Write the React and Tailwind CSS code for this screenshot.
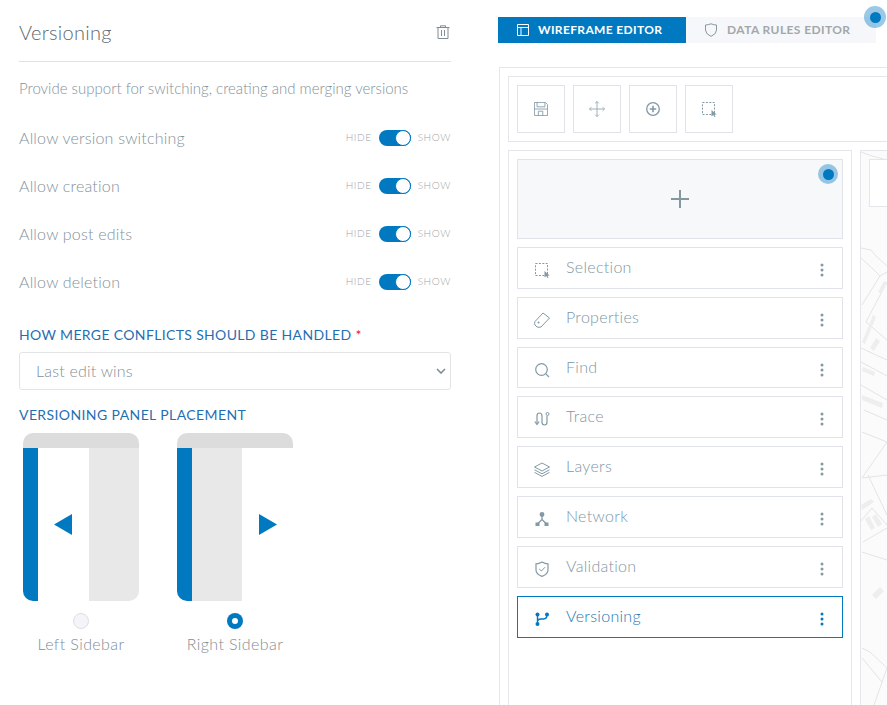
const stroke = "#8399a5";

const Icon = ({ children, className = "", color = stroke }) => (
  <svg viewBox="0 0 16 16" fill="none" stroke={color} strokeWidth="1" className={`w-4 h-4 shrink-0 ${className}`}>
    {children}
  </svg>
);

const SelectGlyph = ({ color }) => (
  <Icon color={color}>
    <rect x="1.5" y="1.5" width="12" height="12" strokeDasharray="2 1.4" />
    <path d="M10.5 9 L15.6 13.4 L13.4 13.7 L14.6 15.8 L13.5 16 L12.2 14 L10.5 15.4 Z" fill={color} stroke="none" />
  </Icon>
);

const TagGlyph = ({ color }) => (
  <Icon color={color}>
    <path d="M9 1 L15.5 6 L7 15 Q5 15.6 3 15 L1 13 Q0 11 1 9.5 Z" />
    <circle cx="4.5" cy="10.5" r="1" fill={color} stroke="none" />
  </Icon>
);

const FindGlyph = ({ color }) => (
  <Icon color={color}>
    <circle cx="7.5" cy="7.5" r="5.8" strokeWidth="1.2" />
    <path d="M11.8 11.8 L15 15" strokeWidth="1.2" />
  </Icon>
);

const TraceGlyph = ({ color }) => (
  <Icon color={color}>
    <path d="M3 13 V5 Q3 2 5.5 2 Q8 2 8 5 V11 Q8 14 10.5 14 Q13 14 13 11 V5" strokeWidth="1.2" />
    <path d="M.8 10.5 L3 13.5 L5.2 10.5" strokeWidth="1.2" />
    <circle cx="13.5" cy="3" r="1.5" />
  </Icon>
);

const LayersGlyph = ({ color }) => (
  <Icon color={color}>
    <path d="M8 2 L15.5 6 L8 10 L.5 6 Z" />
    <path d="M.5 8.8 L8 12.8 L15.5 8.8" />
    <path d="M.5 11.4 L8 15.4 L15.5 11.4" />
  </Icon>
);

const NetworkGlyph = ({ color }) => (
  <Icon color={color}>
    <circle cx="8" cy="3.5" r="2.4" fill={color} stroke="none" />
    <rect x="1.5" y="11.5" width="4" height="3.5" fill={color} stroke="none" />
    <rect x="10.5" y="11.5" width="4" height="3.5" fill={color} stroke="none" />
    <path d="M8 4 V8.5 L3.5 13 M8 8.5 L12.5 13" strokeWidth="1.3" />
  </Icon>
);

const ShieldCheckGlyph = ({ color }) => (
  <Icon color={color}>
    <path d="M8 1 Q11 2.8 14 2.8 V9 Q14 13 8 15.4 Q2 13 2 9 V2.8 Q5 2.8 8 1 Z" strokeWidth="1.2" />
    <path d="M5.2 8 L7.4 10 L11 6.2" />
  </Icon>
);

const BranchGlyph = ({ color }) => (
  <Icon color={color}>
    <circle cx="3.5" cy="3.5" r="2" fill={color} stroke="none" />
    <circle cx="3.5" cy="13" r="2" fill={color} stroke="none" />
    <circle cx="13" cy="3.5" r="2" fill={color} stroke="none" />
    <path d="M3.5 3.5 V13 M3.5 10.5 Q3.5 8 7 8 H9.5 Q13 8 13 3.5" strokeWidth="1.4" />
  </Icon>
);

const items = [
  { name: "Selection", Glyph: SelectGlyph, h: "h-[42px]" },
  { name: "Properties", Glyph: TagGlyph, h: "h-[42px]" },
  { name: "Find", Glyph: FindGlyph, h: "h-[41px]" },
  { name: "Trace", Glyph: TraceGlyph, h: "h-[42px]" },
  { name: "Layers", Glyph: LayersGlyph, h: "h-[42px]" },
  { name: "Network", Glyph: NetworkGlyph, h: "h-[42px]" },
  { name: "Validation", Glyph: ShieldCheckGlyph, h: "h-[42px]" },
  { name: "Versioning", Glyph: BranchGlyph, h: "h-[42px]", active: true },
];

const Kebab = ({ color }) => (
  <svg viewBox="0 0 4 14" className="w-1 h-[14px] mt-1" fill={color}>
    <circle cx="2" cy="2" r="1.5" />
    <circle cx="2" cy="7" r="1.5" />
    <circle cx="2" cy="12" r="1.5" />
  </svg>
);

const Item = ({ name, Glyph, h, active }) => {
  const color = active ? "#0079c1" : stroke;
  return (
    <li
      className={`${h} flex items-center pl-4 pr-[18px] border ${
        active ? "border-[#0079c1] text-[#2277b5]" : "border-[#e0e3e9] text-[#7d97a6]"
      }`}
    >
      <span className="mt-1">
        <Glyph color={color} />
      </span>
      <span className="ml-4 -mt-[2px] flex-1 text-[16px] leading-5 tracking-[0.3px]">{name}</span>
      <Kebab color={color} />
    </li>
  );
};

const ToolButton = ({ children }) => (
  <button className="w-12 h-12 border border-[#e0e3e9] flex items-center justify-center">{children}</button>
);

const Toggle = ({ label }) => (
  <div className="h-12 flex items-center justify-between">
    <span className="text-[16px] tracking-[0.2px] text-[#7f929c]">{label}</span>
    <div className="flex items-center -mt-px text-[10px] tracking-[0.6px] text-[#a0a5a9]">
      <span>HIDE</span>
      <span className="mx-[7px] w-8 h-4 rounded-full bg-[#0079c1] flex justify-end">
        <span className="w-4 h-4 rounded-full bg-white border border-[#0079c1]"></span>
      </span>
      <span>SHOW</span>
    </div>
  </div>
);

const Pulse = ({ className }) => (
  <span className={`absolute flex items-center justify-center rounded-full bg-[#0079c1]/40 ${className}`}>
    <span className="w-[11px] h-[11px] rounded-full bg-[#0079c1]"></span>
  </span>
);

const Placement = ({ side, label, checked }) => (
  <div className="w-[116px] flex flex-col items-center">
    <div className={`w-full h-[168px] flex flex-col overflow-hidden rounded-t-[10px] rounded-bl-[10px] ${side === "left" ? "rounded-br-[10px]" : ""}`}>
      <div className="h-[15px] bg-[#dcdcdc]"></div>
      <div className="flex-1 flex">
        <div className="w-[15px] bg-[#0079c1]"></div>
        {side === "right" && <div className="w-[50px] bg-[#e8e8e8]"></div>}
        <div className="flex-1 flex items-center justify-center">
          <svg viewBox="0 0 18 21" className={`w-[18px] h-[21px] ${side === "left" ? "-ml-px" : ""}`} fill="#0079c1">
            <path d={side === "left" ? "M0 10.5 L18 0 V21 Z" : "M0 0 L18 10.5 L0 21 Z"} />
          </svg>
        </div>
        {side === "left" && <div className="w-[50px] bg-[#e8e8e8]"></div>}
      </div>
    </div>
    {checked ? (
      <span className="mt-3 w-4 h-4 rounded-full bg-[#0079c1] flex items-center justify-center">
        <span className="w-1.5 h-1.5 rounded-full bg-white"></span>
      </span>
    ) : (
      <span className="mt-3 w-4 h-4 rounded-full bg-[#f4f5f8] border border-[#dcdfe3]"></span>
    )}
    <span className="mt-[3px] text-[16px] leading-6 tracking-[0.4px] text-[#7f8d95]">{label}</span>
  </div>
);

const MapLines = () => (
  <svg viewBox="861 151 60 554" className="absolute top-0 left-0 w-[60px] h-[554px]" fill="none" stroke="#e4e4e4">
    <path d="M861 152 L872 156 L887 160" />
    <path d="M861 248 L871 250 L876 256 L887 266" />
    <path d="M861 258 L872 268 L880 276 L887 272" />
    <path d="M880 276 L862 305" />
    <path d="M887 282 L866 322 L887 340" />
    <path d="M861 348 L887 360" />
    <path d="M861 362 L887 376" />
    <path d="M861 385 L887 400" />
    <path d="M864 410 L887 420" />
    <path d="M862 432 L887 442" />
    <path d="M887 442 L862 478 L887 475" />
    <path d="M868 475 L887 515" />
    <path d="M860 522 L872 508 L887 525" />
    <path d="M863 542 L887 528" />
    <path d="M862 552 L887 560" />
    <path d="M862 648 L870 652 L887 668" />
    <path d="M862 658 L882 682" />
    <path d="M887 668 L874 705" />
    <g fill="#eeeeee" stroke="none">
      <path d="M878 292 L884 281 L887 283 L881 294 Z" />
      <path d="M862 342 L873 315 L876 317 L865 344 Z" />
      <path d="M870 348 L876 338 L880 341 L874 351 Z" />
      <path d="M863 367 L875 372 L874 376 L862 371 Z" />
      <path d="M862 395 L883 403 L882 408 L862 400 Z" />
      <path d="M861 505 L871 499 L874 502 L862 510 Z" />
      <path d="M865 519 L869 516 L875 528 L871 530 Z" />
      <path d="M872 517 L876 514 L882 524 L878 527 Z" />
      <path d="M872 595 L880 587 L884 591 L876 599 Z" />
    </g>
  </svg>
);

export default function App() {
  return (
    <div className="w-[887px] h-[705px] overflow-hidden bg-white flex font-['Lato',sans-serif] font-light">
      {/* settings column */}
      <div className="w-[470px] shrink-0 px-[19px]">
        <div className="h-[62px] pt-0.5 border-b border-[#dfe1e3] flex items-center justify-between">
          <h1 className="text-[20px] tracking-[0.3px] text-[#5f676c]">Versioning</h1>
          <svg viewBox="0 0 14 14" className="w-[14px] h-[14px] mr-px" fill="none" stroke="#7f8d95">
            <path d="M.5 2.5 H13.5 M4.5 2.5 V.8 H9.5 V2.5 M2 2.5 V13.5 H12 V2.5 M5.5 5 V11 M8.5 5 V11" />
          </svg>
        </div>
        <p className="mt-4 text-[15px] leading-5 text-[#7f929c]">Provide support for switching, creating and merging versions</p>
        <div className="mt-4">
          <Toggle label="Allow version switching" />
          <Toggle label="Allow creation" />
          <Toggle label="Allow post edits" />
          <Toggle label="Allow deletion" />
        </div>
        <label className="block mt-[19px] text-[14px] leading-5 font-normal tracking-[0.35px] text-[#1f6fb2]">
          HOW MERGE CONFLICTS SHOULD BE HANDLED <span className="text-[#e0202c]">*</span>
        </label>
        <div className="relative mt-[7px]">
          <select className="w-full h-[38px] pl-4 appearance-none bg-white border border-[#e2e4e6] rounded-[3px] text-[16px] tracking-[0.2px] text-[#7f8f98]">
            <option>Last edit wins</option>
          </select>
          <svg viewBox="0 0 10 6" className="absolute right-[5px] top-4 w-[10px] h-[6px] pointer-events-none" fill="none" stroke="#7f8d95" strokeWidth="1.6">
            <path d="M1 1 L5 5 L9 1" />
          </svg>
        </div>
        <label className="block mt-[15px] text-[14px] leading-5 font-normal tracking-[0.4px] text-[#1f6fb2]">
          VERSIONING PANEL PLACEMENT
        </label>
        <div className="mt-2 ml-1 flex gap-[38px]">
          <Placement side="left" label="Left Sidebar" />
          <Placement side="right" label="Right Sidebar" checked />
        </div>
      </div>

      {/* editor column */}
      <div className="relative flex-1 min-w-0 ml-7 pt-[17px] overflow-hidden">
        <div className="flex">
          <div className="w-[188px] h-[26px] pl-[19px] bg-[#0079c1] flex items-center gap-[9px] text-white text-[12px] font-bold tracking-[0.35px]">
            <svg viewBox="0 0 12 12" className="w-3 h-3" fill="none" stroke="white">
              <path d="M.5 .5 H11.5 V11.5 H.5 Z M.5 3.5 H11.5 M4 3.5 V11.5" />
            </svg>
            WIREFRAME EDITOR
          </div>
          <div className="w-[190px] h-[26px] pl-[19px] bg-[#f5f7fa] flex items-center gap-[10px] text-[#a3a7aa] text-[12px] font-bold tracking-[0.4px]">
            <svg viewBox="0 0 12 14" className="w-3 h-[14px]" fill="none" stroke="#8a979f">
              <path d="M6 .8 Q9 2 11.5 2 V7 Q11.5 11 6 13.4 Q.5 11 .5 7 V2 Q3 2 6 .8 Z" />
            </svg>
            DATA RULES EDITOR
          </div>
        </div>
        <Pulse className="w-[22px] h-[22px] left-[366px] top-[6px]" />

        <div className="mt-6 ml-px w-[600px] h-[700px] border border-[#e3e6ea] p-2 flex flex-col gap-2">
          <div className="border border-[#e3e6ea] p-2 flex gap-2">
            <ToolButton>
              <Icon className="w-[14px] h-[14px]">
                <path d="M.5 .5 H13 L15.5 3 V15.5 H.5 Z" />
                <path d="M3.5 .5 V5.5 H12.5 V.5 M.5 8 H15.5 M5 15.5 V10.5 H10 V15.5" />
              </Icon>
            </ToolButton>
            <ToolButton>
              <Icon color="#9db0ba">
                <path d="M8 .5 V15.5 M.5 8 H15.5 M6.2 2.3 L8 .5 L9.8 2.3 M6.2 13.7 L8 15.5 L9.8 13.7 M2.3 6.2 L.5 8 L2.3 9.8 M13.7 6.2 L15.5 8 L13.7 9.8" />
              </Icon>
            </ToolButton>
            <ToolButton>
              <Icon>
                <circle cx="8" cy="8" r="6.3" strokeWidth="1.3" />
                <path d="M8 4.8 V11.2 M4.8 8 H11.2" strokeWidth="1.6" />
              </Icon>
            </ToolButton>
            <ToolButton>
              <SelectGlyph color={stroke} />
            </ToolButton>
          </div>

          <div className="flex-1 flex gap-2">
            <div className="relative w-[344px] shrink-0 border border-[#e3e6ea] p-2">
              <div className="h-20 bg-[#f7f8fa] border border-[#e0e3e9] flex items-center justify-center">
                <svg viewBox="0 0 18 18" className="w-[18px] h-[18px]" stroke="#85979f" strokeWidth="2">
                  <path d="M9 0 V18 M0 9 H18" />
                </svg>
              </div>
              <Pulse className="w-5 h-5 right-[13px] top-[13px]" />
              <ul className="mt-2 flex flex-col gap-2">
                {items.map((item) => (
                  <Item key={item.name} {...item} />
                ))}
              </ul>
            </div>

            <div className="relative flex-1 border border-[#e3e6ea] bg-[#fbfbfb] p-2">
              <MapLines />
              <div className="relative h-12 pl-4 bg-white border border-[#e3e6ea] flex items-center">
                <Icon><circle cx="8" cy="8" r="6" /></Icon>
              </div>
            </div>
          </div>
        </div>
      </div>
    </div>
  );
}
